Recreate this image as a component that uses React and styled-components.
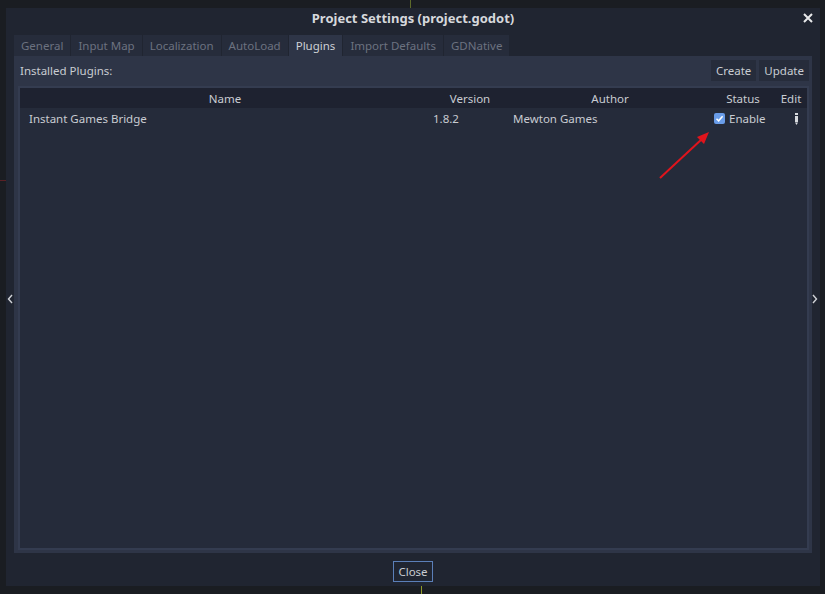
import React from "react";
import styled, { createGlobalStyle } from "styled-components";

const Global = createGlobalStyle`
  html, body { margin: 0; padding: 0; }
  body {
    background: #1a1d22;
    font-family: "Noto Sans", "Open Sans", sans-serif;
    width: 825px; height: 594px; overflow: hidden;
  }
`;

const Stage = styled.div`
  position: relative;
  width: 825px;
  height: 594px;
  box-sizing: border-box;
  padding: 8px 5px 8px 6px;
  background:
    linear-gradient(#8f9a2a, #8f9a2a) 421px 586px / 1px 8px no-repeat,
    linear-gradient(#5d6a2a, #5d6a2a) 410px 0 / 1px 8px no-repeat,
    linear-gradient(#5a2025, #5a2025) 0 180px / 6px 1px no-repeat,
    #1a1d22;
`;

const Dialog = styled.div`
  width: 100%;
  height: 100%;
  background: #202531;
  display: flex;
  flex-direction: column;
  box-sizing: border-box;
  padding: 0 8px 4px 8px;
  position: relative;
`;

const TitleBar = styled.div`
  height: 27px;
  box-sizing: border-box;
  padding-top: 1px;
  display: flex;
  align-items: flex-start;
  justify-content: center;
  color: #d6d8dc;
  font-weight: bold;
  font-size: 13px;
  line-height: 18px;
  position: relative;
`;

const CloseX = styled.div`
  position: absolute;
  right: -3px;
  top: 3px;
  width: 14px;
  height: 14px;
  display: flex;
  align-items: center;
  justify-content: center;
`;

const Tabs = styled.div`
  display: flex;
  gap: 1px;
  height: 21px;
`;

const Tab = styled.div`
  padding: 0 7px;
  display: flex;
  align-items: center;
  font-size: 11.5px;
  color: ${(p) => (p.$active ? "#cdd0d5" : "#6c7280")};
  background: ${(p) => (p.$active ? "#2e3547" : "#262c3b")};
`;

const Panel = styled.div`
  flex: 1;
  background: #2e3547;
  display: flex;
  flex-direction: column;
  padding: 4px 3px 3px 4px;
  min-height: 0;
`;

const PanelHead = styled.div`
  display: flex;
  align-items: center;
  height: 21px;
  margin-bottom: 5px;
`;

const Label = styled.div`
  flex: 1;
  font-size: 11.5px;
  color: #c9ccd2;
  padding-left: 2px;
`;

const Btn = styled.div`
  height: 21px;
  padding: 0 5px;
  margin-left: 3px;
  display: flex;
  align-items: center;
  font-size: 11.5px;
  color: #c9ccd2;
  background: #262c3b;
`;

const Tree = styled.div`
  flex: 1;
  background: #252b3a;
  border: 2px solid #343c50;
  display: flex;
  flex-direction: column;
`;

const Cols = "grid-template-columns: 410px 80px 200px 66px 30px;";

const HeadRow = styled.div`
  display: grid;
  ${Cols}
  height: 20px;
  background: #1e2230;
  align-items: center;
`;

const HeadCell = styled.div`
  text-align: center;
  font-size: 11.5px;
  color: #c9ccd2;
`;

const Row = styled.div`
  display: grid;
  ${Cols}
  height: 21px;
  align-items: center;
  font-size: 11.5px;
  color: #c9ccd2;
`;

const Cell = styled.div`
  padding-left: ${(p) => p.$pl || 0}px;
  display: flex;
  align-items: center;
`;

const Check = styled.span`
  width: 11px;
  height: 11px;
  border-radius: 2px;
  background: #699ce8;
  display: inline-flex;
  align-items: center;
  justify-content: center;
  margin-right: 4px;
`;

const Footer = styled.div`
  height: 29px;
  box-sizing: border-box;
  padding-top: 8px;
  display: flex;
  align-items: flex-start;
  justify-content: center;
`;

const CloseBtn = styled.div`
  height: 19px;
  padding: 0 4px;
  border: 1px solid #5b7fb8;
  display: flex;
  align-items: center;
  font-size: 11.5px;
  color: #c9ccd2;
  background: #202531;
`;

const SideArrow = styled.div`
  position: absolute;
  top: 281px;
  ${(p) => (p.$right ? "right: 2px;" : "left: 1px;")}
  width: 6px;
  height: 14px;
`;

const ArrowOverlay = styled.svg`
  position: absolute;
  left: 0;
  top: 0;
  pointer-events: none;
`;

export default function App() {
  return (
    <>
      <Global />
      <Stage>
        <Dialog>
          <TitleBar>
            Project Settings (project.godot)
            <CloseX>
              <svg width="10" height="10" viewBox="0 0 10 10">
                <path d="M1 1 L9 9 M9 1 L1 9" stroke="#e8e9eb" strokeWidth="2" />
              </svg>
            </CloseX>
          </TitleBar>
          <Tabs>
            {["General", "Input Map", "Localization", "AutoLoad", "Plugins", "Import Defaults", "GDNative"].map((t) => (
              <Tab key={t} $active={t === "Plugins"}>{t}</Tab>
            ))}
          </Tabs>
          <Panel>
            <PanelHead>
              <Label>Installed Plugins:</Label>
              <Btn>Create</Btn>
              <Btn>Update</Btn>
            </PanelHead>
            <Tree>
              <HeadRow>
                <HeadCell>Name</HeadCell>
                <HeadCell>Version</HeadCell>
                <HeadCell>Author</HeadCell>
                <HeadCell>Status</HeadCell>
                <HeadCell>Edit</HeadCell>
              </HeadRow>
              <Row>
                <Cell $pl={9}>Instant Games Bridge</Cell>
                <Cell $pl={3}>1.8.2</Cell>
                <Cell $pl={3}>Mewton Games</Cell>
                <Cell $pl={4}>
                  <Check>
                    <svg width="9" height="9" viewBox="0 0 9 9">
                      <path d="M1.5 4.8 L3.6 6.8 L7.6 2.2" stroke="#fff" strokeWidth="1.5" fill="none" />
                    </svg>
                  </Check>
                  Enable
                </Cell>
                <Cell $pl={18}>
                  <svg width="5" height="12" viewBox="0 0 5 12">
                    <rect x="1" y="0" width="3" height="2" fill="#d8dade" />
                    <rect x="1" y="3" width="3" height="6" fill="#d8dade" />
                    <path d="M1 9.5 L4 9.5 L2.5 12 Z" fill="#d8dade" />
                  </svg>
                </Cell>
              </Row>
            </Tree>
          </Panel>
          <Footer>
            <CloseBtn>Close</CloseBtn>
          </Footer>
          <SideArrow>
            <svg width="6" height="14" viewBox="0 0 6 14">
              <path d="M5 3 L1.5 7 L5 11" stroke="#d0d3d8" strokeWidth="1.4" fill="none" />
            </svg>
          </SideArrow>
          <SideArrow $right>
            <svg width="6" height="14" viewBox="0 0 6 14">
              <path d="M1 3 L4.5 7 L1 11" stroke="#d0d3d8" strokeWidth="1.4" fill="none" />
            </svg>
          </SideArrow>
        </Dialog>
        <ArrowOverlay width="825" height="594">
          <line x1="660" y1="178" x2="702" y2="139" stroke="#e0141c" strokeWidth="2" />
          <path d="M709 132 L697 137 L704 144 Z" fill="#e0141c" />
        </ArrowOverlay>
      </Stage>
    </>
  );
}
